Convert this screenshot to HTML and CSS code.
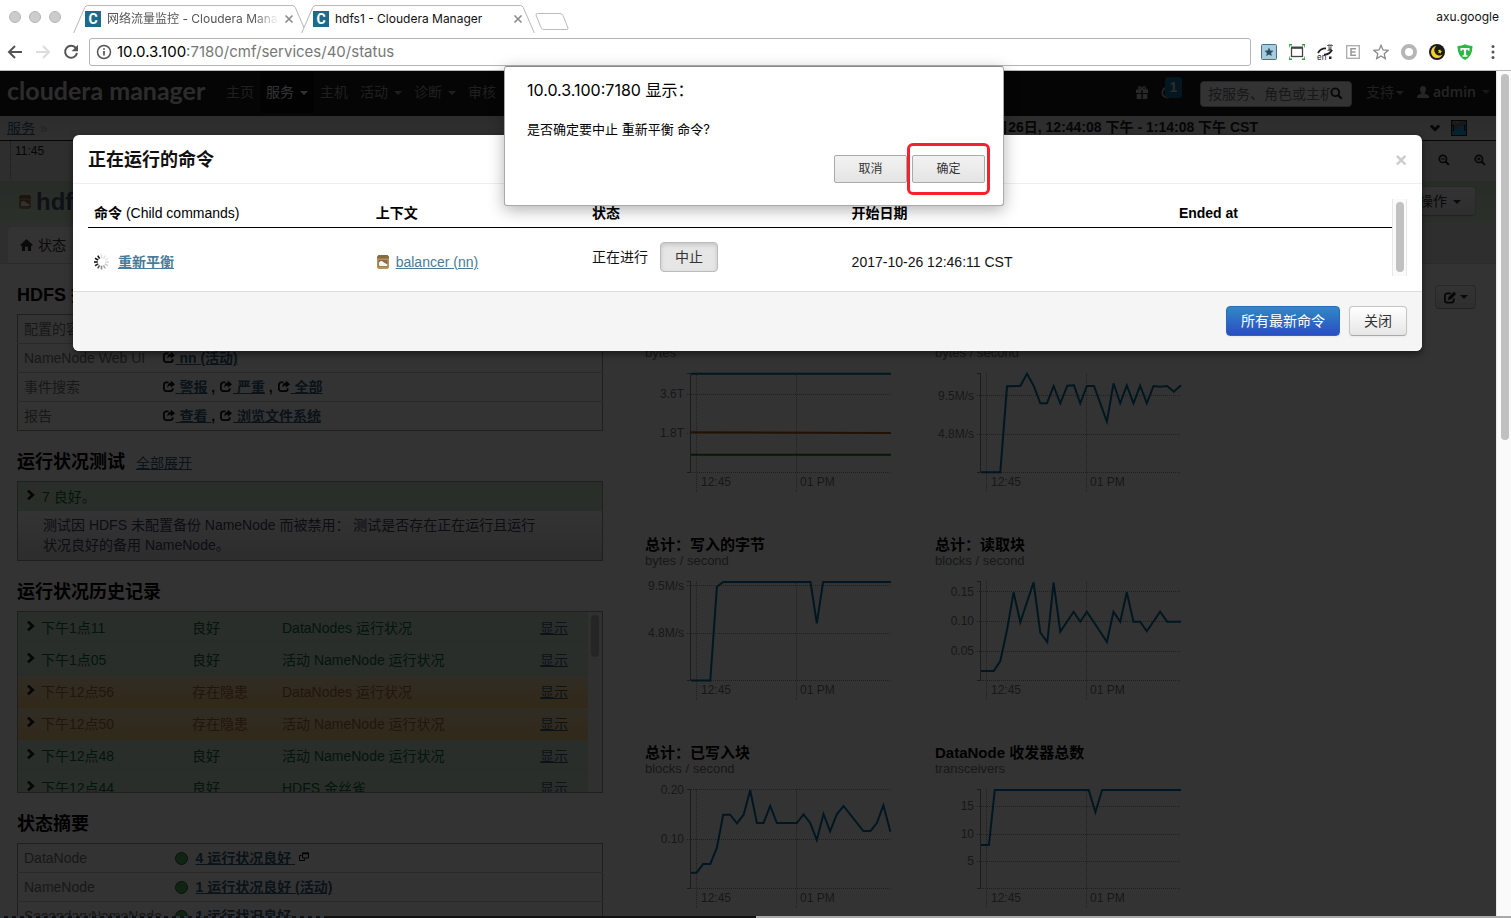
FILE: index.html
```html
<!DOCTYPE html>
<html lang="zh-CN">
<head>
<meta charset="utf-8">
<title>hdfs1 - Cloudera Manager</title>
<link rel="stylesheet" href="styles.css">
</head>
<body>
<svg class="defs" aria-hidden="true">
  <symbol id="i-close" viewBox="0 0 10 10"><path d="M1.500 1.500l7 7M8.500 1.500l-7 7" stroke="currentColor" stroke-width="1.600"/></symbol>
  <symbol id="i-tab" viewBox="0 0 242 29"><path d="M.5 29L12 2.500Q13 .5 15 .5H227Q229 .5 230 2.500L241.500 29" fill="#fff" stroke="#b4b4b4"/></symbol>
  <symbol id="i-share" viewBox="0 0 14 14"><path d="M6.500 2.500H4A2.500 2.500 0 0 0 1.500 5v4.500A2.500 2.500 0 0 0 4 12h4.500A2.500 2.500 0 0 0 11 9.500V9" fill="none" stroke="currentColor" stroke-width="1.900"/><path d="M9 .5l4.500 4L9 8.300V6Q6.500 6 5.200 8.300 5.200 3.200 9 2.800z" fill="currentColor"/></symbol>
  <symbol id="i-chev" viewBox="0 0 10 12"><path d="M1 2.500L3 .8 8.800 6 3 11.200 1 9.500 4.600 6z" fill="currentColor"/></symbol>
  <symbol id="i-zoom" viewBox="0 0 14 14"><circle cx="5.700" cy="5.700" r="4.200" fill="none" stroke="currentColor" stroke-width="2"/><path d="M8.700 8.700l4 4" stroke="currentColor" stroke-width="2.400"/></symbol>
  <symbol id="i-box" viewBox="0 0 14 16"><path d="M2.500 1h9L13 3v10.500L11.500 15h-9L1 13.500V3z" fill="#b3925f"/><path d="M2.500 1h9L13 3v1.500H1V3z" fill="#8a6a40"/><path d="M2.500 6h9v6.500h-9z" fill="#8a6a40"/><path d="M3 11V8.500Q4 6.500 6 7l2 1.500 3.500 2-.5 1.500H3.500z" fill="#f4f4f4"/></symbol>
</svg>

<header class="chrome">
  <div class="tabstrip">
    <div class="lights"><i></i><i></i><i></i></div>
    <div class="tab tab-idle">
      <svg class="tab-shape"><use href="#i-tab"/></svg>
      <span class="favicon">C</span><span class="tab-title">网络流量监控 - Cloudera Manager</span>
      <button class="tab-close" aria-label="关闭标签页"><svg><use href="#i-close"/></svg></button>
    </div>
    <div class="tab">
      <svg class="tab-shape"><use href="#i-tab"/></svg>
      <span class="favicon">C</span><span class="tab-title">hdfs1 - Cloudera Manager</span>
      <button class="tab-close" aria-label="关闭标签页"><svg><use href="#i-close"/></svg></button>
    </div>
    <svg class="newtab" viewBox="0 0 34 17"><path d="M1 2Q.8.5 2.500.5H25q2 0 3 2l5 12.500q.5 1.500-1.500 1.500H9q-2 0-3-2z" fill="none" stroke="#bbb"/></svg>
    <span class="profile">axu.google</span>
  </div>
  <div class="toolbar">
    <button aria-label="后退"><svg viewBox="0 0 16 16"><path d="M15 8H2M8 2L2 8l6 6" fill="none" stroke="#555" stroke-width="2"/></svg></button>
    <button class="fwd" aria-label="前进"><svg viewBox="0 0 16 16"><path d="M1 8h13M8 2l6 6-6 6" fill="none" stroke="#ddd" stroke-width="2"/></svg></button>
    <button aria-label="重新加载"><svg viewBox="0 0 16 16"><path d="M13 4.200A6 6 0 1 0 14 9" fill="none" stroke="#555" stroke-width="2"/><path d="M15 .8v6.400H8.600z" fill="#555"/></svg></button>
    <div class="address">
      <svg viewBox="0 0 16 16"><circle cx="8" cy="8" r="6.500" fill="none" stroke="#555" stroke-width="1.500"/><path d="M8 7v4.500M8 4.200v1.600" stroke="#555" stroke-width="1.700"/></svg>
      <span><b>10.0.3.100</b>:7180/cmf/services/40/status</span>
    </div>
    <div class="extensions">
      <svg viewBox="0 0 16 16"><rect x=".5" y=".5" width="15" height="15" rx="1" fill="#a9cbdc" stroke="#47708a"/><path d="M8 3.500l1.300 3 3.200.3-2.400 2.100.7 3.200L8 10.400l-2.800 1.700.7-3.200-2.400-2.100 3.200-.3z" fill="#24506b"/></svg>
      <svg viewBox="0 0 16 16"><rect x="2.500" y="4" width="11" height="8.500" fill="#fff" stroke="#444" stroke-width="1.300"/><path d="M2 3.500h12" stroke="#444" stroke-width="2"/><path d="M0 3.500V.7h3M13 .7h3v2.800M16 12.500v2.800h-3M3 15.300H0v-2.800" fill="none" stroke="#2f9e45" stroke-width="1.400"/></svg>
      <svg viewBox="0 0 16 16"><path d="M1 9Q4 4 9 4.500M15 6q-3 5-8 4.500" fill="none" stroke="#222" stroke-width="1.800"/><path d="M10 1.500h6M12 0v3M14 0v3M11 4h4M13 3v3M10.500 6.500L13 5l2.500 1.500" stroke="#444" stroke-width=".8"/><text x="0" y="16" font-size="8" fill="#222">en</text><path d="M12 12.500h2.500V15H12z" fill="#222"/></svg>
      <svg viewBox="0 0 16 16"><rect x="1.700" y="1.700" width="12.600" height="12.600" fill="none" stroke="#aaa" stroke-width="1.300"/><path d="M11 4.700H6v6.600h5M6 8h4.500" fill="none" stroke="#999" stroke-width="1.600"/></svg>
      <svg viewBox="0 0 16 16"><path d="M8 1.300l2 4.600 5 .5-3.800 3.300 1.100 4.900L8 12l-4.300 2.600 1.100-4.900L1 6.400l5-.5z" fill="none" stroke="#8a8a8a" stroke-width="1.300"/></svg>
      <svg viewBox="0 0 16 16"><circle cx="8" cy="8" r="6" fill="none" stroke="#b5b5b5" stroke-width="4"/></svg>
      <svg viewBox="0 0 16 16"><circle cx="8" cy="8" r="8" fill="#1a1a1a"/><path d="M7.500 2a6 6 0 1 0 6 8.500A5 5 0 0 1 7.500 2z" fill="#f5cf2e"/><path d="M11 5l.6 1.700 1.700.3-1.500 1 .2 1.700-1.200-1-1.700.4.800-1.500-.8-1.500h1.600z" fill="#f5cf2e"/></svg>
      <svg viewBox="0 0 16 16"><path d="M.5 2Q5 2 8 .2q3 1.800 7.500 1.800 0 10.500-7.500 14-7.500-3.500-7.500-14z" fill="#2cb742"/><path d="M3.500 4v3h1.200V5.700h2.200v5.600H5.500v1.400h5v-1.400H9.100V5.700h2.200V7h1.200V4z" fill="#fff"/></svg>
      <svg viewBox="0 0 16 16"><circle cx="8" cy="2.500" r="1.500" fill="#555"/><circle cx="8" cy="8" r="1.500" fill="#555"/><circle cx="8" cy="13.500" r="1.500" fill="#555"/></svg>
    </div>
  </div>
</header>

<div class="viewport">
  <div class="page">
    <nav class="navbar">
      <a class="brand" href="#">cloudera manager</a>
      <a class="nav-item" href="#">主页</a>
      <a class="nav-item active" href="#">服务<i class="caret"></i></a>
      <a class="nav-item" href="#">主机</a>
      <a class="nav-item" href="#">活动<i class="caret"></i></a>
      <a class="nav-item" href="#">诊断<i class="caret"></i></a>
      <a class="nav-item" href="#">审核</a>
      <div class="nav-right">
        <svg class="gift" viewBox="0 0 12 13"><path d="M0 3.500h5.300V7H0zM6.700 3.500H12V7H6.700zM.7 8h4.600v5H.7zM6.700 8h4.600v5H6.700z" fill="#ccc"/><path d="M6 3.500Q2.500 3.500 2.500 1.800 3 0 4.500 1T6 3.500Q6.500 2 7.500 1t2 .8T6 3.500" fill="none" stroke="#ccc" stroke-width="1.200"/></svg>
        <div class="running"><svg viewBox="0 0 12 12"><circle cx="6" cy="6" r="4.800" fill="none" stroke="#bbb" stroke-width="1.600"/></svg><span class="badge">1</span></div>
        <div class="search"><input type="text" aria-label="搜索" placeholder="按服务、角色或主机"><svg><use href="#i-zoom"/></svg></div>
        <a class="support" href="#">支持<i class="caret"></i></a>
        <a class="user" href="#"><svg viewBox="0 0 12 12"><path d="M6 0C8 0 9 1.500 9 3.300 9 5 8.200 6.500 7.500 7v.8Q12 9 12 10.500V12H0v-1.500Q0 9 4.500 7.800V7C3.800 6.500 3 5 3 3.300 3 1.500 4 0 6 0z" fill="currentColor"/></svg>admin<i class="caret"></i></a>
      </div>
    </nav>
    <div class="crumbs">
      <a href="#">服务</a><span class="sep">»</span>
      <span class="range">2017年10月26日, 12:44:08 下午 - 1:14:08 下午 CST</span>
      <svg class="down" viewBox="0 0 12 10"><path d="M.8 3.500L2.800 1.500 6 4.500l3.200-3 2 2L6 8.800z" fill="#222"/></svg>
      <svg class="chart-ico" viewBox="0 0 16 16"><rect x=".5" y=".5" width="15" height="15" fill="#777" stroke="#222"/><path d="M1 15V6l5 4 4-5 2 2 3-4v12z" fill="#18a8e8"/><path d="M3 2h1M5 2h1M7 2h1" stroke="#eee"/><path d="M.5 5.500h2v5h-2zM13.500 5.500h2v5h-2z" fill="#999" stroke="#111"/></svg>
    </div>
    <div class="timeline">
      <span class="tick">11:45</span>
      <svg viewBox="0 0 14 14"><use href="#i-zoom"/><path d="M3.700 5.700h4" stroke="#222" stroke-width="1.400"/></svg>
      <svg viewBox="0 0 14 14"><use href="#i-zoom"/><path d="M3.700 5.700h4M5.700 3.700v4" stroke="#222" stroke-width="1.400"/></svg>
    </div>
    <div class="titlebar">
      <svg><use href="#i-box"/></svg>
      <h1>hdfs1</h1>
      <button class="btn">操作<i class="caret"></i></button>
    </div>
    <div class="tabs"><a href="#"><svg viewBox="0 0 14 13"><path d="M7 0l7 6.500-1 .8h-1V13H8.500V8.500h-3V13H2V7.300H1l-1-.8z" fill="currentColor"/></svg>状态</a></div>
    <main class="content">
      <div class="left">
        <section>
          <h2>HDFS 摘要</h2>
          <table class="panel facts">
            <tr><th>配置的容量</th><td></td></tr>
            <tr><th>NameNode Web UI</th><td><svg><use href="#i-share"/></svg><a href="#">&nbsp;nn (活动)</a></td></tr>
            <tr><th>事件搜索</th><td><svg><use href="#i-share"/></svg><a href="#">&nbsp;警报</a> , <svg><use href="#i-share"/></svg><a href="#">&nbsp;严重</a> , <svg><use href="#i-share"/></svg><a href="#">&nbsp;全部</a></td></tr>
            <tr><th>报告</th><td><svg><use href="#i-share"/></svg><a href="#">&nbsp;查看&nbsp;</a>, <svg><use href="#i-share"/></svg><a href="#">&nbsp;浏览文件系统</a></td></tr>
          </table>
        </section>
        <section>
          <h2>运行状况测试 <a href="#">全部展开</a></h2>
          <div class="panel tests">
            <div class="good-row"><svg><use href="#i-chev"/></svg>7 良好。</div>
            <p>测试因 HDFS 未配置备份 NameNode 而被禁用： 测试是否存在正在运行且运行<br>状况良好的备用 NameNode。</p>
          </div>
        </section>
        <section>
          <h2>运行状况历史记录</h2>
          <div class="panel history">
            <div class="rows">
              <div class="row good"><svg><use href="#i-chev"/></svg><span>下午1点11</span><span>良好</span><span>DataNodes 运行状况</span><a href="#">显示</a></div>
              <div class="row good"><svg><use href="#i-chev"/></svg><span>下午1点05</span><span>良好</span><span>活动 NameNode 运行状况</span><a href="#">显示</a></div>
              <div class="row warn"><svg><use href="#i-chev"/></svg><span>下午12点56</span><span>存在隐患</span><span>DataNodes 运行状况</span><a href="#">显示</a></div>
              <div class="row warn"><svg><use href="#i-chev"/></svg><span>下午12点50</span><span>存在隐患</span><span>活动 NameNode 运行状况</span><a href="#">显示</a></div>
              <div class="row good"><svg><use href="#i-chev"/></svg><span>下午12点48</span><span>良好</span><span>活动 NameNode 运行状况</span><a href="#">显示</a></div>
              <div class="row good"><svg><use href="#i-chev"/></svg><span>下午12点44</span><span>良好</span><span>HDFS 金丝雀</span><a href="#">显示</a></div>
            </div>
            <div class="bar"><i></i></div>
          </div>
        </section>
        <section>
          <h2>状态摘要</h2>
          <table class="panel facts roles">
            <tr><th>DataNode</th><td><i class="dot"></i><a href="#">4 运行状况良好&nbsp;</a><svg class="pop" viewBox="0 0 10 10"><path d="M3.500 1h6v5h-6z" fill="none" stroke="#000"/><path d="M3 1.500h7" stroke="#000" stroke-width="1.500"/><path d="M2.500 3.500H.5v5h5V7" fill="none" stroke="#000"/></svg></td></tr>
            <tr><th>NameNode</th><td><i class="dot"></i><a href="#">1 运行状况良好 (活动)</a></td></tr>
            <tr><th>SecondaryNameNode</th><td><i class="dot"></i><a href="#">1 运行状况良好</a></td></tr>
          </table>
        </section>
      </div>
      <div class="right">
        <div class="right-head"><button class="btn small" aria-label="编辑"><svg viewBox="0 0 14 14"><path d="M8 2.500H4A2.500 2.500 0 0 0 1.500 5v5A2.500 2.500 0 0 0 4 12.500h4.500A2.500 2.500 0 0 0 11 10V8" fill="none" stroke="#222" stroke-width="1.900"/><path d="M5 9.500l.5-2.700L11 1.200l2.200 2.200-5.500 5.500zM12 .5l1.500 1.500" fill="#222" stroke="#222" stroke-width=".5"/></svg><i class="caret"></i></button></div>
        <div class="charts" id="charts"></div>
      </div>
    </main>
  </div>
  <div class="page-scroll"><i></i></div>

  <div class="backdrop">
    <section class="modal" role="dialog" aria-labelledby="modal-title">
      <header><h3 id="modal-title">正在运行的命令</h3><button class="x" aria-label="关闭对话框">×</button></header>
      <div class="modal-body">
        <table>
          <colgroup><col class="c1"><col class="c2"><col class="c3"><col class="c4"><col></colgroup>
          <thead><tr><th>命令 <span>(Child commands)</span></th><th>上下文</th><th>状态</th><th>开始日期</th><th>Ended at</th></tr></thead>
          <tbody><tr>
            <td><div class="cell"><svg class="spin" viewBox="0 0 16 16"><g stroke-width="1.700"><path d="M8 0v4" stroke="#ddd"/><path d="M12 1.100l-2 3.400" stroke="#e4e4e4"/><path d="M14.900 4l-3.400 2" stroke="#e8e8e8"/><path d="M16 8h-4" stroke="#ddd"/><path d="M14.900 12l-3.400-2" stroke="#ccc"/><path d="M12 14.900l-2-3.400" stroke="#aaa"/><path d="M8 16v-4" stroke="#888"/><path d="M4 14.900l2-3.400" stroke="#555"/><path d="M1.100 12l3.400-2" stroke="#222"/><path d="M0 8h4" stroke="#111"/><path d="M1.100 4l3.400 2" stroke="#111"/><path d="M4 1.100l2 3.400" stroke="#111"/></g></svg><a class="strong" href="#">重新平衡</a></div></td>
            <td><div class="cell tight"><svg><use href="#i-box"/></svg><a href="#">balancer (nn)</a></div></td>
            <td><div class="cell status">正在进行<button class="btn pressed">中止</button></div></td>
            <td>2017-10-26 12:46:11 CST</td><td></td>
          </tr></tbody>
        </table>
        <div class="bar"><i></i></div>
      </div>
      <footer><button class="btn primary">所有最新命令</button><button class="btn">关闭</button></footer>
    </section>
  </div>
</div>
<div class="desktop"><i class="term"></i><i class="win"></i></div>

<section class="alert" role="alertdialog" aria-labelledby="alert-title">
  <h4 id="alert-title">10.0.3.100:7180 显示：</h4>
  <p>是否确定要中止 重新平衡 命令?</p>
  <div class="actions"><button>取消</button><span class="mark"><button>确定</button></span></div>
</section>
<script src="charts.js"></script>
</body>
</html>
```

FILE: styles.css
```css
* { box-sizing: border-box; }
html, body { height: 100%; }
body {
  margin: 0; display: flex; flex-direction: column; overflow: hidden; background: #fff; color: #111;
  font: 14px/20px "Liberation Sans", "Noto Sans CJK SC", sans-serif;
}
h1, h2, h3, h4, p, figure { margin: 0; }
button, input { font: inherit; color: inherit; }
svg { display: block; flex: none; }
.defs { position: absolute; width: 0; height: 0; }
a { color: #4a7a96; }

/* browser window */
.chrome { flex: none; height: 71px; border-bottom: 1px solid #b9b9b9; font-family: Inter, "Noto Sans CJK SC", sans-serif; }
.tabstrip { display: flex; height: 33px; padding: 0 12px 0 9px; align-items: center; }
.lights { display: flex; gap: 8px; width: 60px; }
.lights i { width: 12px; height: 12px; border-radius: 50%; background: #ccc; border: 1px solid #b5b5b5; }
.tab { position: relative; display: flex; align-items: center; width: 242px; height: 28px; margin: 5px -14px 0 0; padding: 0 16px; font-size: 12px; line-height: 28px; }
.tab-shape { position: absolute; inset: 0; width: 242px; height: 28px; }
.favicon { position: relative; width: 16px; height: 16px; background: #1e6a8a; color: #fff; font: bold 14px/16px Roboto, sans-serif; text-align: center; }
.tab-title { position: relative; flex: 1; margin-left: 6px; overflow: hidden; white-space: nowrap; }
.tab-idle .tab-title { flex: 0 0 172px; color: #555; -webkit-mask-image: linear-gradient(90deg, #000 85%, transparent); mask-image: linear-gradient(90deg, #000 85%, transparent); }
.tab-close { position: relative; border: 0; padding: 0; margin-left: 5px; background: none; color: #8a8a8a; }
.tab-close svg { width: 10px; height: 10px; }
.newtab { width: 34px; height: 17px; margin: 9px 0 0 10px; }
.profile { margin-left: auto; font-size: 12px; }
.toolbar { display: flex; align-items: center; height: 37px; padding: 0 10px 0 7px; }
.toolbar button { border: 0; padding: 0; margin-right: 12px; background: none; }
.toolbar svg { width: 16px; height: 16px; }
.address { flex: 1; display: flex; align-items: center; gap: 5px; height: 28px; margin-left: -2px; padding-left: 6px; border: 1px solid #b4b4b4; border-radius: 3px; font-size: 15px; color: #777; }
.address b { font-weight: 400; color: #000; }
.extensions { display: flex; gap: 12px; margin-left: 10px; }

/* page */
.viewport { position: relative; flex: 1; min-height: 0; display: flex; overflow: hidden; }
.page { flex: 1; min-width: 0; overflow: hidden; }
.page a { color: #34607e; }
.page-scroll { flex: none; width: 15px; padding: 3px 3px 0 4px; background: #fafafa; border-left: 1px solid #e8e8e8; }
.page-scroll i { display: block; width: 8px; height: 43.5%; border-radius: 4px; background: #c1c1c1; }
.caret { display: inline-block; margin-left: 6px; vertical-align: middle; border: 4px solid transparent; border-top-color: currentColor; border-bottom: 0; }
.page .navbar { display: flex; align-items: center; height: 45px; padding: 0 6px 3px 7px; background: #1b1b1b; color: #999; }
.page .navbar a { color: inherit; text-decoration: none; }
.page .navbar .brand { width: 213px; padding-bottom: 4px; font: bold 25px/30px Lato, sans-serif; color: #dadada; white-space: nowrap; }
.nav-item { flex: none; height: 42px; padding: 0 6px; line-height: 42px; }
.page .navbar .active { background: #0a0a0a; color: #fff; }
.nav-right { flex: 1; display: flex; align-items: center; justify-content: flex-end; }
.gift { width: 12px; height: 13px; }
.running { position: relative; width: 21px; margin-left: 13px; }
.running svg { width: 13px; height: 13px; }
.badge { position: absolute; left: 4px; top: -9px; width: 17px; height: 21px; border-radius: 3px; background: #14709b; color: #ddd; font-weight: bold; text-align: center; }
.search { display: flex; align-items: center; width: 152px; height: 26px; margin: 3px 14px 0 18px; padding: 0 8px 0 7px; background: #fff; border: 1px solid #bbb; border-radius: 4px; color: #222; }
.search input { width: 122px; border: 0; padding: 0; background: none; outline: 0; }
.search input::placeholder { color: #777; }
.search svg { width: 13px; height: 13px; }
.support .caret { margin-left: 2px; }
.user { display: flex; align-items: center; margin-left: 13px; font: 14px/20px "Open Sans", sans-serif; font-weight: 600; }
.page .navbar .user { color: #bbb; }
.user svg { width: 12px; height: 12px; margin-right: 4px; }
.user .caret { color: #777; }
.crumbs { display: flex; align-items: center; height: 25px; padding: 0 29px 0 7px; background: linear-gradient(#ddd, #f0f0f0); border-bottom: 1px solid #222; }
.sep { margin-left: 5px; color: #aaa; }
.range { margin: 0 171px 3px auto; font-weight: bold; color: #222; }
.down { width: 12px; height: 10px; margin-right: 10px; }
.chart-ico { width: 16px; height: 16px; }
.timeline { display: flex; align-items: center; height: 40px; padding: 0 10px; background: #e4e4e4; color: #222; }
.timeline svg { width: 12px; height: 12px; margin: 0 0 2px 24px; }
.tick { align-self: flex-start; height: 37px; margin-right: auto; padding-left: 4px; border-left: 1px dotted #777; font-size: 12px; line-height: 20px; }
.titlebar { display: flex; align-items: center; height: 41px; padding: 0 20px 0 18px; background: linear-gradient(#c6dec6, #d2ecd2); color: #333; }
.titlebar svg { width: 14px; height: 16px; margin-right: 4px; }
h1 { font-size: 24px; line-height: 40px; color: #465a78; }
.btn { height: 30px; padding: 0 14px; border: 1px solid #c5c5c5; border-bottom-color: #aaa; border-radius: 4px; background: linear-gradient(#fff, #e6e6e6); color: #333; box-shadow: 0 1px 2px rgba(0, 0, 0, .05); }
.titlebar .btn { margin: 0 0 2px auto; }
.btn.small { display: flex; align-items: center; height: 24px; padding: 0 7px; }
.btn.small svg { width: 14px; height: 13px; }
.btn.small .caret { margin-left: 3px; }
.tabs { display: flex; height: 42px; padding: 5px 8px 0; background: #e6e6e6; border-bottom: 1px solid #d0d0d0; }
.page .tabs a { display: flex; align-items: center; gap: 5px; height: 36px; padding: 0 12px; border-radius: 4px 4px 0 0; background: #fff; color: #333; text-decoration: none; }
.tabs svg { width: 13px; height: 12px; }
.content { display: flex; gap: 42px; padding: 21px 20px 0 17px; }
.left { flex: 0 0 586px; display: flex; flex-direction: column; gap: 21px; }
h2 { height: 20px; margin-bottom: 9px; font-size: 18px; line-height: 20px; color: #000; white-space: nowrap; }
h2 a { margin-left: 6px; font-size: 14px; font-weight: 400; }
.panel { width: 100%; border: 1px solid #999; }
.facts { border-collapse: collapse; }
.facts tr { height: 29px; border-bottom: 1px solid #ccc; }
.facts tr:last-child { border-bottom-color: #999; }
.facts th { width: 144px; padding: 0 0 0 6px; font-weight: 400; text-align: left; color: #777; white-space: nowrap; }
.facts td { padding: 0; font-weight: bold; }
.facts td svg { display: inline-block; width: 14px; height: 13px; vertical-align: -1px; }
.roles th { width: 157px; }
.roles a { margin-left: 8px; }
.facts .pop { width: 10px; height: 10px; margin-left: 4px; vertical-align: 1px; }
.dot { display: inline-block; width: 13px; height: 13px; border: 1px solid #1b5e2b; border-radius: 50%; background: #57b35f; vertical-align: -2px; }
.tests { height: 80px; background: linear-gradient(#fff 40%, #ddd); }
.good-row { display: flex; align-items: center; height: 29px; padding-left: 8px; background: linear-gradient(#cfe2cf, #c8e8c8); color: #0a7038; }
.good-row svg, .row svg { width: 10px; height: 12px; margin: 0 6px 4px 0; color: #222; }
.tests p { padding: 4px 0 0 25px; color: #44445c; white-space: nowrap; }
.history { display: flex; height: 182px; overflow: hidden; }
.rows { flex: 1; }
.row { display: grid; grid-template-columns: 15px 151px 90px 1fr 48px; align-items: center; height: 32px; padding-left: 8px; }
.row.good { background: linear-gradient(#d3e6d5, #cbe2cd); color: #0a7038; }
.row.warn { background: linear-gradient(#f0dfbb, #f5c978); color: #b06a3c; }
.history .bar { width: 14px; padding: 3px 3px 0; background: #eee; }
.history .bar i { display: block; width: 8px; height: 42px; border-radius: 4px; background: #bbb; }
.right { flex: 1; min-width: 0; }
.right-head { display: flex; justify-content: flex-end; height: 42px; }
.charts { display: grid; grid-template-columns: repeat(auto-fill, 250px); column-gap: 40px; row-gap: 42px; max-width: 700px; }
figure h3 { min-height: 20px; font-size: 15px; line-height: 20px; color: #000; white-space: nowrap; }
figure p { height: 16px; margin-top: -2px; font-size: 13px; line-height: 16px; color: #777; }
figure svg { width: 250px; height: 130px; margin-top: 2px; }
.axis { stroke: #888; fill: none; }
.grid { stroke: #999; stroke-dasharray: 1 1; }
.line { fill: none; stroke-width: 2; }
.lbl { font-size: 12px; fill: #777; }

/* running commands dialog */
.backdrop { position: absolute; inset: 0 15px 0 0; padding: 64px 74px 0 73px; background: rgba(0, 0, 0, .8); }
.modal { background: #fff; border-radius: 6px; box-shadow: 0 3px 7px rgba(0, 0, 0, .5); overflow: hidden; }
.modal header { display: flex; align-items: center; justify-content: space-between; height: 49px; padding: 2px 15px 0; border-bottom: 1px solid #eee; }
.modal h3 { font-size: 18px; font-weight: bold; }
.x { border: 0; padding: 0; background: none; font-size: 20px; font-weight: bold; color: #ccc; }
.modal-body { display: flex; padding: 15px; }
.modal table { flex: 1; border-collapse: collapse; table-layout: fixed; }
.c1 { width: 21.6%; } .c2 { width: 16.6%; } .c3 { width: 19.9%; } .c4 { width: 25.1%; }
.modal th { height: 28px; padding: 0 6px; border-bottom: 1px solid #000; text-align: left; color: #000; }
.modal th span { font-weight: 400; }
.modal td { height: 48px; padding: 20px 6px 0; vertical-align: middle; }
.cell { display: flex; align-items: center; gap: 9px; }
.cell svg { width: 14px; height: 16px; }
.cell .spin { width: 15px; height: 16px; }
.tight { gap: 6px; }
.strong { font-weight: bold; }
.status { gap: 12px; margin-top: -10px; }
.pressed { background: #e6e6e6; box-shadow: inset 0 2px 4px rgba(0, 0, 0, .15); border-color: #bbb; }
.modal .bar { width: 15px; height: 77px; padding: 3px; background: #fafafa; border: solid #e8e8e8; border-width: 0 1px; }
.modal .bar i { display: block; width: 8px; height: 70px; border-radius: 4px; background: #c1c1c1; }
.modal footer { display: flex; justify-content: flex-end; gap: 9px; height: 60px; padding: 14px 15px; background: #f5f5f5; border-top: 1px solid #ddd; }
.primary { background: linear-gradient(#2f8ac4, #2b4cc4); border-color: #2a68b8; color: #fff; }

/* what shows under the window */
.desktop { flex: none; display: flex; height: 2px; }
.desktop .term { flex: 1; background: repeating-linear-gradient(90deg, #2c3640 0 4px, #111 4px 8px) 0 0 / 326px 2px no-repeat #111; }
.desktop .win { flex: 1; background: #aaa; }

/* script confirm */
.alert { position: absolute; left: 504px; top: 66px; width: 500px; height: 140px; padding: 13px 13px 0 22px; background: #fff; border: 1px solid #aaa; border-top-color: #888; border-radius: 3px; box-shadow: 0 4px 16px rgba(0, 0, 0, .3); font-family: Inter, "Noto Sans CJK SC", sans-serif; color: #000; }
.alert h4 { font-size: 16px; font-weight: 400; line-height: 20px; }
.alert p { margin-top: 19px; font-size: 13px; }
.actions { display: flex; justify-content: flex-end; align-items: center; margin-top: 4px; }
.actions button { width: 73px; height: 28px; padding: 0; border: 1px solid #aaa; border-radius: 2px; background: linear-gradient(#f2f2f2, #e4e4e4); font-size: 12px; color: #333; }
.mark { display: flex; padding: 9px 2px; border: 3px solid #f5222d; border-radius: 6px; }
```

FILE: charts.js
```js
const BLUE = '#006e9f';
const charts = [
  { title: '', unit: 'bytes', ticks: [['3.6T', 31], ['1.8T', 70]], lines: [
    [BLUE, '46,10.7 246,10.7'], ['#b0581c', '46,69.3 246,70'], ['#1f7a24', '46,91.7 246,91.7']] },
  { title: '', unit: 'bytes / second', ticks: [['9.5M/s', 32.7], ['4.8M/s', 71.3]], lines: [
    [BLUE, '46,109.3 65.3,109.3 72,23.3 85.3,23 92,10.7 99,23.3 105.3,40.3 112,40.3 118.6,23 125.3,40.3 132.3,22.7 139,22.3 145.2,40.3 151.9,23 159,23 171.9,58.7 178.5,20.3 185.2,40.3 191.8,22.3 198.5,40.3 205.2,22.7 211.8,40.3 218.5,23 225.1,23.7 232.2,23 238.8,28.7 246,22.3']] },
  { title: '总计：写入的字节', unit: 'bytes / second', ticks: [['9.5M/s', 14.7], ['4.8M/s', 62.3]], lines: [
    [BLUE, '46,109.5 65.3,109.5 71.9,15.7 78.2,11 165.5,11 171.8,52.3 178.1,11 246,11']] },
  { title: '总计：读取块', unit: 'blocks / second', ticks: [['0.15', 20.7], ['0.10', 50.3], ['0.05', 80.3]], lines: [
    [BLUE, '46,100 58.7,100 65.3,90 72,59 78.6,21.3 85.3,51.3 98.6,11.3 105.3,61.7 112.3,71 118.6,11.3 125.3,60.7 138.6,40.7 145.2,50.7 151.9,40.7 165.2,60.7 171.9,71 178.5,40.7 185.2,50.7 191.8,21.3 198.5,50.7 205.2,50.7 211.8,60.3 225.1,40.7 232.2,50.7 246,50.7']] },
  { title: '总计：已写入块', unit: 'blocks / second', ticks: [['0.20', 10.7], ['0.10', 60.3]], lines: [
    [BLUE, '46,93.7 51.6,93.7 58.2,85 65.3,85 71.9,68.7 78.2,35.7 85.2,35.7 91.9,44.3 98.6,35.7 105.2,11.3 111.9,44 118.5,44 125.2,27 131.9,44 151.8,44 158.5,35.3 165.2,44 171.8,61 178.5,35 185.1,52.3 191.8,35.3 198.5,27 218.4,52 225.5,52 231.8,44 238.4,26.3 245.4,52.7']] },
  { title: 'DataNode 收发器总数', unit: 'transceivers', ticks: [['15', 27.3], ['10', 55], ['5', 82.3]], lines: [
    [BLUE, '46,66 53.9,66 59.8,11 153.7,11 160.4,33.3 167.1,11 246,11']] }
];

const draw = c => `<figure><h3>${c.title}</h3><p>${c.unit}</p><svg viewBox="0 0 250 130">
  ${c.ticks.map(([t, y]) => `<path class="grid" d="M42 ${Math.floor(y) + 0.5}H246"/><text class="lbl" x="39" y="${Math.round(y) + 4}" text-anchor="end">${t}</text>`).join('')}
  <path class="grid" d="M46 109.5H246M51.5 10V130M151.5 10V130"/>
  <path class="axis" d="M42 10.5H45.5V109.5H42"/>
  ${c.lines.map(([s, p]) => `<polyline class="line" stroke="${s}" points="${p}"/>`).join('')}
  <text class="lbl" x="56" y="123">12:45</text><text class="lbl" x="155" y="123">01 PM</text>
</svg></figure>`;

document.getElementById('charts').innerHTML = charts.map(draw).join('');
```
